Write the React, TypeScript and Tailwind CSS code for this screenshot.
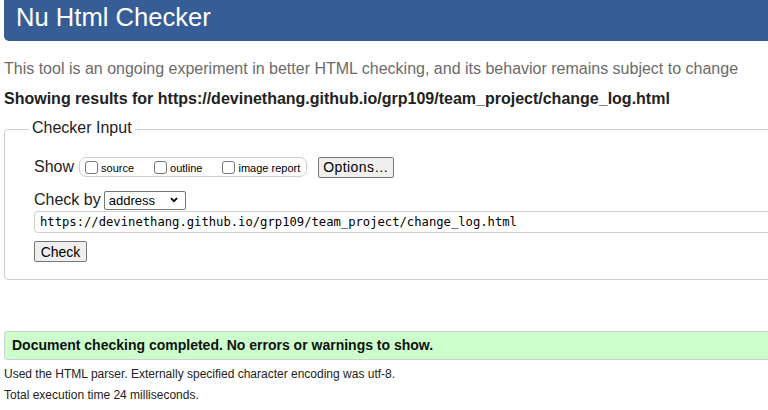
import React from "react";

function Box({ label, gap }: { label: string; gap?: boolean }) {
  return (
    <span className={`flex items-center ${gap ? "mr-[20px]" : ""}`}>
      <span className="w-[13px] h-[13px] border border-[#767676] rounded-[3px] bg-white mr-[3px]" />
      <span className="text-[11px] leading-[13px] mt-[2px]">{label}</span>
    </span>
  );
}

export default function App() {
  return (
    <div
      className="w-[768px] h-[410px] overflow-hidden bg-white text-black"
      style={{ fontFamily: '"Liberation Sans", Arial, sans-serif' }}
    >
      <div className="ml-[4px] w-[800px] h-[41px] bg-[#365d95] rounded-bl-[5px] pl-[12px] pt-[2px]">
        <div className="text-white text-[25.6px] leading-[30px] whitespace-nowrap">Nu Html Checker</div>
      </div>
      <div className="pl-[4px] mt-[19px] text-[16px] leading-[18px] text-[#6b6b6b] whitespace-nowrap">
        This tool is an ongoing experiment in better HTML checking, and its behavior remains subject to change
      </div>
      <div className="pl-[4px] mt-[12px] text-[16px] leading-[18px] font-bold text-[#222] whitespace-nowrap">
        Showing results for https://devinethang.github.io/grp109/team_project/change_log.html
      </div>
      <div className="relative ml-[4px] mt-[21px] w-[800px] h-[151px] border border-[#cfcfcf] rounded-[4px]">
        <div className="absolute left-[24px] top-[-11px] bg-white px-[3px] text-[16px] leading-[18px] text-[#222]">
          Checker Input
        </div>
        <div className="pl-[29px] pt-[26px]">
          <div className="flex items-center h-[22px]">
            <span className="text-[16px] text-[#222] mr-[5px]">Show</span>
            <div className="flex items-center h-[20px] w-[228px] border border-[#cfcfcf] rounded-[7px] pl-[5px]">
              <Box label="source" gap />
              <Box label="outline" gap />
              <Box label="image report" />
            </div>
            <button className="ml-[11px] h-[21px] w-[76px] bg-[#efefef] border border-[#767676] rounded-[2px] text-[14px] leading-[16px] tracking-[0.4px] text-black">
              Options…
            </button>
          </div>
          <div className="flex items-center mt-[11px] h-[22px]">
            <span className="text-[16px] text-[#222] mr-[3px]">Check by</span>
            <div className="flex items-center justify-between h-[19px] w-[82px] border border-[#767676] rounded-[2px] pl-[4px] pr-[7px]">
              <span className="text-[13px] leading-[15px]">address</span>
              <svg width="8" height="6" viewBox="0 0 8 6">
                <path d="M1 1.2 L4 4.2 L7 1.2" stroke="black" strokeWidth="1.8" fill="none" />
              </svg>
            </div>
          </div>
          <div className="mt-[0px] h-[22px] w-[760px] border border-[#cfcfcf] rounded-[4px] pl-[5px] flex items-center">
            <span className="text-[12.2px] whitespace-nowrap" style={{ fontFamily: '"DejaVu Sans Mono", "Liberation Mono", monospace' }}>
              https://devinethang.github.io/grp109/team_project/change_log.html
            </span>
          </div>
          <button className="mt-[8px] h-[21px] w-[53px] bg-[#efefef] border border-[#767676] rounded-[2px] text-[14px] leading-[16px] text-black">
            Check
          </button>
        </div>
      </div>
      <div className="ml-[4px] mt-[51px] w-[800px] h-[29px] bg-[#ccffcc] border border-[#cfcfcf] rounded-[3px] pl-[7px] flex items-center">
        <span className="text-[14px] font-bold text-[#111] whitespace-nowrap">
          Document checking completed. No errors or warnings to show.
        </span>
      </div>
      <div className="pl-[4px] mt-[7px] text-[12px] leading-[14px] text-[#222] whitespace-nowrap">
        Used the HTML parser. Externally specified character encoding was utf-8.
      </div>
      <div className="pl-[4px] mt-[7px] text-[12px] leading-[14px] text-[#222] whitespace-nowrap">
        Total execution time 24 milliseconds.
      </div>
    </div>
  );
}
